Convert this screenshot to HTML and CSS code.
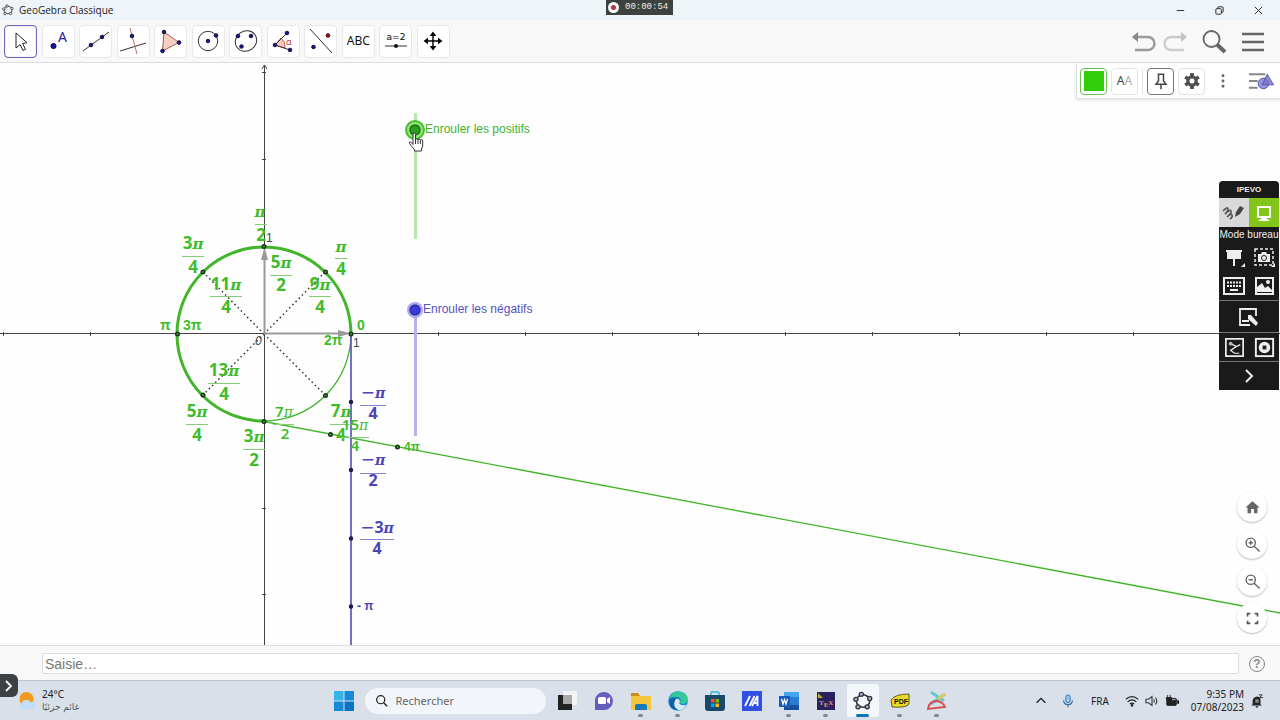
FILE: index.html
```html
<!DOCTYPE html>
<html lang="fr">
<head>
<meta charset="utf-8">
<title>GeoGebra Classique</title>
<link rel="stylesheet" href="styles.css">
</head>
<body>
<header class="titlebar">
  <svg class="app-mark" viewBox="0 0 24 24"><ellipse cx="12" cy="12" rx="8" ry="7.500" fill="none" stroke="#555" stroke-width="2"/><g fill="#e4e6f2" stroke="#444" stroke-width="1.600"><circle cx="10" cy="4" r="2.500"/><circle cx="20" cy="9" r="2.500"/><circle cx="17" cy="19" r="2.500"/><circle cx="6" cy="19" r="2.500"/><circle cx="3.500" cy="10" r="2.500"/></g></svg>
  <span class="app-title">GeoGebra Classique</span>
  <div class="window-buttons">
    <button aria-label="Réduire"><svg viewBox="0 0 12 12"><path d="M2 6h8"/></svg></button>
    <button aria-label="Restaurer"><svg viewBox="0 0 12 12"><rect x="2" y="4" width="6" height="6" rx="1"/><path d="M4 4V3q0-1 1-1h4q1 0 1 1v4q0 1-1 1H8"/></svg></button>
    <button aria-label="Fermer"><svg viewBox="0 0 12 12"><path d="M2 2l8 8M10 2l-8 8"/></svg></button>
  </div>
  <div class="recorder"><span class="rec-dot"></span>00:00:54</div>
</header>

<nav class="toolbar">
  <div class="tools">
    <button class="tool active" aria-label="Déplacer"><svg viewBox="0 0 32 32"><path d="M11 8v15l4-3.500 3 6 2.500-1.300-3-5.700 4.500-.8z" fill="#fff" stroke="#222"/></svg></button>
    <button class="tool" aria-label="Point"><svg viewBox="0 0 32 32"><circle cx="11.500" cy="21" r="2.600" class="pt"/><text x="16" y="17" class="tool-a">A</text></svg></button>
    <button class="tool" aria-label="Droite"><svg viewBox="0 0 32 32"><path d="M3 26L29 7" class="ln"/><circle cx="11" cy="20" r="1.800" class="pt"/><circle cx="22" cy="12" r="1.800" class="pt"/></svg></button>
    <button class="tool" aria-label="Perpendiculaire"><svg viewBox="0 0 32 32"><path d="M3 26l26-8" class="ln"/><path d="M13 3l7 26" stroke="#c66" fill="none"/><circle cx="15" cy="11" r="1.800" class="pt"/></svg></button>
    <button class="tool" aria-label="Polygone"><svg viewBox="0 0 32 32"><path d="M9 7l15 10.500L7.500 26z" fill="#f3d0c2" stroke="#a65a50"/><circle cx="9" cy="7" r="1.800" class="pt"/><circle cx="24" cy="17.500" r="1.800" class="pt"/><circle cx="7.500" cy="26" r="1.800" class="pt"/></svg></button>
    <button class="tool" aria-label="Cercle"><svg viewBox="0 0 32 32"><circle cx="16" cy="16" r="9.700" class="ln"/><circle cx="16" cy="16" r="1.800" class="pt"/><circle cx="24" cy="10.500" r="1.800" class="pt"/></svg></button>
    <button class="tool" aria-label="Ellipse"><svg viewBox="0 0 32 32"><ellipse cx="16" cy="16" rx="11" ry="10" transform="rotate(-35 16 16)" class="ln"/><circle cx="8" cy="11" r="1.800" class="pt"/><circle cx="21" cy="11" r="1.800" class="pt"/><circle cx="11.500" cy="21.500" r="1.800" class="pt"/></svg></button>
    <button class="tool" aria-label="Angle"><svg viewBox="0 0 32 32"><path d="M8 20l6-7q5 4 4 10z" fill="#f8c8c0" stroke="#c55"/><path d="M20 8L8 20l15 5" class="ln"/><text x="19" y="20" class="tool-alpha">α</text><circle cx="20" cy="8" r="1.800" class="pt"/><circle cx="8" cy="20" r="1.800" class="pt"/><circle cx="23" cy="25" r="1.800" class="pt"/></svg></button>
    <button class="tool" aria-label="Symétrie"><svg viewBox="0 0 32 32"><path d="M5 4l22 24" class="ln"/><circle cx="8.500" cy="22" r="1.800" class="pt"/><circle cx="23" cy="10.500" r="1.800" fill="#a11" stroke="#400"/></svg></button>
    <button class="tool text-tool">ABC</button>
    <button class="tool" aria-label="Curseur a=2"><svg viewBox="0 0 32 32"><text x="16" y="15" class="tool-eq">a=2</text><path d="M5 21h22" class="ln"/><circle cx="16" cy="21" r="2" fill="#111"/></svg></button>
    <button class="tool" aria-label="Déplacer Graphique"><svg viewBox="0 0 32 32"><path d="M16 9v14M9 16h14" stroke="#000" stroke-width="1.400"/><path d="M16 6.500l3.300 4.500h-6.600zM16 25.500l3.300-4.500h-6.600zM6.500 16l4.500-3.300v6.600zM25.500 16L21 12.700v6.600z"/></svg></button>
  </div>
  <div class="toolbar-right">
    <button aria-label="Annuler"><svg viewBox="0 0 26 26"><path d="M5 9h12a6 6 0 0 1 0 13H4" fill="none" stroke="#999" stroke-width="2.400"/><path d="M1 9l6-5v10z" fill="#888"/></svg></button>
    <button aria-label="Rétablir"><svg viewBox="0 0 26 26"><path d="M21 9H9a6 6 0 0 0 0 13h13" fill="none" stroke="#ccc" stroke-width="2.400"/><path d="M25 9l-6-5v10z" fill="#c4c4c4"/></svg></button>
    <button aria-label="Rechercher"><svg viewBox="0 0 26 26"><circle cx="10.500" cy="11" r="8" fill="none" stroke="#666" stroke-width="1.800"/><path d="M16 16.500l8 7.500" stroke="#666" stroke-width="4"/></svg></button>
    <button aria-label="Menu"><svg viewBox="0 0 26 26"><path d="M2 6h22M2 14h22M2 22h22" stroke="#666" stroke-width="2.500"/></svg></button>
  </div>
</nav>

<main class="stage">
  <svg class="graph" viewBox="0 63 1280 583" preserveAspectRatio="xMinYMin slice">
    <g class="axes">
      <path d="M0 333.500h1280M264.500 646V65M262 69l2.500-4 2.500 4"/>
      <path d="M3.500 332v4M90.500 332v4M177.500 332v4M438.500 332v4M525.500 332v4M612.500 332v4M698.500 332v4M785.500 332v4M872.500 332v4M959.500 332v4M1046.500 332v4M1133.500 332v4M262 72.500h4M262 159.500h4M262 508.500h4M262 594.500h4"/>
    </g>
    <path class="dotted" d="M264 334L203 272M264 334l61-62M264 334l-61 61M264 334l61 61"/>
    <g class="vectors"><path d="M264 333.500h76M264.500 334v-76"/><path class="tip" d="M351 333.500l-13-3.500v7zM264.500 247l-3.500 13h7z"/></g>
    <path class="arc thick" d="M351 334A87 87 0 1 0 264 421"/>
    <path class="arc thin" d="M264 421A87 87 0 0 0 351 334"/>
    <path class="arc thin" d="M264 421.500L1280 613"/>
    <path class="down" d="M351 334v312"/>
    <g class="axis-text"><text x="266" y="242">1</text><text x="353" y="347">1</text><text x="255" y="345" class="origin">0</text></g>
    <g class="frac">
      <g><text x="260" y="217" class="pi">π</text><text x="261" y="241">2</text><path d="M255 224.500h12"/></g>
      <g><text x="193" y="249">3<tspan class="pi">π</tspan></text><text x="193" y="273">4</text><path d="M182 256.500h22"/></g>
      <g><text x="341" y="252" class="pi">π</text><text x="341" y="275">4</text><path d="M335 258.500h12"/></g>
      <g><text x="226" y="290">11<tspan class="pi">π</tspan></text><text x="226" y="313">4</text><path d="M210 296.500h32"/></g>
      <g><text x="281" y="268">5<tspan class="pi">π</tspan></text><text x="281" y="291">2</text><path d="M270 275.500h22"/></g>
      <g><text x="320" y="290">9<tspan class="pi">π</tspan></text><text x="320" y="313">4</text><path d="M309 296.500h22"/></g>
      <g><text x="224" y="376">13<tspan class="pi">π</tspan></text><text x="224" y="400">4</text><path d="M208 383.500h32"/></g>
      <g><text x="197" y="417">5<tspan class="pi">π</tspan></text><text x="197" y="441">4</text><path d="M186 424.500h22"/></g>
      <g><text x="254" y="442">3<tspan class="pi">π</tspan></text><text x="254" y="466">2</text><path d="M243 449.500h22"/></g>
      <g><text x="341" y="417">7<tspan class="pi">π</tspan></text><text x="341" y="441">4</text><path d="M330 424.500h22"/></g>
      <g class="light"><text x="284" y="417">7<tspan class="pi">π</tspan></text><text x="285" y="439">2</text><path d="M273 424.500h21"/></g>
      <g class="light"><text x="355" y="430">15<tspan class="pi">π</tspan></text><text x="355" y="451">4</text><path d="M341 437.500h28"/></g>
      <g class="blue"><text x="373" y="398"><tspan class="minus">−</tspan><tspan class="pi">π</tspan></text><text x="373" y="419">4</text><path d="M360 405.500h26"/></g>
      <g class="blue"><text x="373" y="465"><tspan class="minus">−</tspan><tspan class="pi">π</tspan></text><text x="373" y="486">2</text><path d="M360 473.500h26"/></g>
      <g class="blue"><text x="377" y="533"><tspan class="minus">−</tspan>3<tspan class="pi">π</tspan></text><text x="377" y="554">4</text><path d="M360 539.500h34"/></g>
    </g>
    <g class="plain"><text x="160" y="330">π</text><text x="183" y="330">3π</text><text x="357" y="330">0</text><text x="324" y="345">2π</text></g>
    <g class="plain small"><text x="404" y="451">4π</text><text x="357" y="610" class="ink">- π</text></g>
    <g class="dots"><circle cx="264" cy="246.500" r="1.800"/><circle cx="203" cy="272" r="1.800"/><circle cx="325.500" cy="272" r="1.800"/><circle cx="177.500" cy="334" r="1.800"/><circle cx="351" cy="334" r="1.800"/><circle cx="203" cy="395" r="1.800"/><circle cx="325.500" cy="395.500" r="1.800"/><circle cx="264" cy="421.500" r="1.800"/><circle cx="330.500" cy="434.500" r="1.800"/><circle cx="397.500" cy="447" r="1.800"/></g>
    <g class="dots navy"><circle cx="351" cy="402" r="1.500"/><circle cx="351" cy="470" r="1.500"/><circle cx="351" cy="538.500" r="1.500"/><circle cx="351" cy="606.500" r="1.500"/></g>
  </svg>

  <input class="slider positive" id="positive" type="range" min="0" max="126" value="109">
  <label class="slider-label positive-label" for="positive">Enrouler les positifs</label>
  <input class="slider negative" id="negative" type="range" min="0" max="126" value="126">
  <label class="slider-label negative-label" for="negative">Enrouler les négatifs</label>
  <svg class="hand" viewBox="0 0 16 20"><path d="M5 11V2.500Q5 1 6.200 1t1.300 1.500V8q0-1.200 1.200-1.200T10 8q0-1 1.200-1T12.400 8.500q0-1 1.100-1t1.200 1.500v4q0 2-1.200 4v2H6.500v-1.500Q4 15 1.500 11.500q-.5-1.300.6-1.500T5 12.500z" fill="#fff" stroke="#333" stroke-linejoin="round"/><path d="M7.500 8v4M10 8v4M12.400 8.500V12" stroke="#333"/></svg>

  <div class="stylebar">
    <button class="swatch" aria-label="Couleur"><span></span></button>
    <button class="aa" aria-label="Style de l'étiquette"><b>A</b>A</button>
    <span class="rule"></span>
    <button class="pin" aria-label="Épingler"><svg viewBox="0 0 24 24"><path d="M8 4h8M9 4v8l-3 4h12l-3-4V4M12 16v6" fill="none" stroke="#444" stroke-width="1.800"/></svg></button>
    <button aria-label="Réglages"><svg viewBox="0 0 24 24"><path d="M12 2.500v19M3.800 7.200l16.400 9.600M20.200 7.200L3.800 16.800" stroke="#505050" stroke-width="4.500"/><circle cx="12" cy="12" r="5" fill="#fff" stroke="#505050" stroke-width="4"/></svg></button>
    <button class="bare" aria-label="Plus"><svg viewBox="0 0 24 24" fill="#666"><circle cx="12" cy="4" r="2.200"/><circle cx="12" cy="12" r="2.200"/><circle cx="12" cy="20" r="2.200"/></svg></button>
    <button class="bare views" aria-label="Vues"><svg viewBox="0 0 28 20"><path d="M1 3h17M1 10h9M1 17h9" stroke="#888" stroke-width="2"/><circle cx="16" cy="12.500" r="5.500" fill="#9a94e0" stroke="#555aa0"/><path d="M20 3l6.500 11h-12z" fill="#7771d0" fill-opacity=".8" stroke="#555aa0"/></svg></button>
  </div>

  <aside class="palette">
    <div class="palette-name">IPEVO</div>
    <div class="modes">
      <button aria-label="Mode annotation"><svg viewBox="0 0 30 28"><path d="M4 12q5-5 5-2t-3 5q5-5 6-3t-4 6q4-4 5-2t-2 4" fill="none" stroke="#555" stroke-width="1.600"/><path d="M16 18l1-5 4-6 4 2-4 6z" fill="#444"/></svg></button>
      <button class="on" aria-label="Mode bureau"><svg viewBox="0 0 30 28"><rect x="9" y="8" width="12" height="10" fill="none" stroke="#fff" stroke-width="2"/><path d="M13 19h4l4 3H9z" fill="#fff"/></svg></button>
    </div>
    <div class="mode-name">Mode bureau</div>
    <div class="pair">
      <button aria-label="Tableau"><svg viewBox="0 0 24 24"><path d="M4 5h16v2h-1v7H5V7H4zM11 14h2v7h-2zM23 18v4h-4z" fill="#eee"/></svg></button>
      <button aria-label="Capture"><svg viewBox="0 0 24 24"><rect x="3" y="4" width="18" height="16" fill="none" stroke="#eee" stroke-width="1.500" stroke-dasharray="3 2"/><path d="M6 9h3l1-2h4l1 2h3v8H6zM23 18v4h-4z" fill="#eee"/><circle cx="12" cy="13" r="2.500" fill="#eee" stroke="#1a1a1a"/></svg></button>
      <button aria-label="Clavier"><svg viewBox="0 0 24 24"><rect x="2" y="4" width="20" height="16" fill="none" stroke="#eee" stroke-width="2"/><path d="M5 8.500h14M5 12h14" stroke="#eee" stroke-width="2" stroke-dasharray="2 1"/><path d="M8 16h8" stroke="#eee" stroke-width="2"/></svg></button>
      <button aria-label="Image"><svg viewBox="0 0 24 24"><rect x="4" y="4" width="17" height="16" fill="none" stroke="#eee" stroke-width="2"/><path d="M5 18v-5l5-4 3 5 3-2 4 4v2z" fill="#eee"/><circle cx="16" cy="8" r="2" fill="#eee"/></svg></button>
    </div>
    <div class="single"><button aria-label="Page"><svg viewBox="0 0 24 24"><path d="M19 11V4H3v16h10M5 16h7" fill="none" stroke="#eee" stroke-width="1.800"/><path d="M11 10l3 0 7 8-2 3-8-7z" fill="#eee"/></svg></button></div>
    <div class="pair low">
      <button aria-label="Caméra"><svg viewBox="0 0 24 24"><rect x="3" y="3" width="18" height="18" fill="none" stroke="#eee" stroke-width="1.800"/><path d="M8 8l6 3 4-2M14 11l-6 4 4 3h5" fill="none" stroke="#eee" stroke-width="1.300"/><circle cx="8" cy="8" r="2" fill="#bbb"/></svg></button>
      <button aria-label="Enregistrer"><svg viewBox="0 0 24 24"><rect x="3" y="3" width="18" height="18" fill="none" stroke="#eee" stroke-width="2"/><circle cx="12" cy="12" r="6" fill="#eee"/><rect x="10" y="10" width="4" height="4" fill="#222"/></svg></button>
    </div>
    <div class="single last"><button aria-label="Suite"><svg viewBox="0 0 24 24"><path d="M9 6l6 6-6 6" fill="none" stroke="#eee" stroke-width="2"/></svg></button></div>
  </aside>

  <div class="zoomers">
    <button aria-label="Vue initiale"><svg viewBox="0 0 24 24" fill="#666"><path d="M10 20v-6h4v6h5v-8h3L12 3 2 12h3v8z"/></svg></button>
    <button aria-label="Agrandir"><svg viewBox="0 0 24 24" fill="none" stroke="#666" stroke-width="2"><circle cx="9.500" cy="9.500" r="6.500"/><path d="M14 14l8 8M6.500 9.500h6M9.500 6.500v6"/></svg></button>
    <button aria-label="Réduire"><svg viewBox="0 0 24 24" fill="none" stroke="#666" stroke-width="2"><circle cx="9.500" cy="9.500" r="6.500"/><path d="M14 14l8 8M6.500 9.500h6"/></svg></button>
    <button aria-label="Plein écran"><svg viewBox="0 0 24 24" fill="none" stroke="#555" stroke-width="2.400"><path d="M5 9V5h4M15 5h4v4M19 15v4h-4M9 19H5v-4"/></svg></button>
  </div>
</main>

<section class="entry">
  <input class="entry-field" type="text" placeholder="Saisie…" aria-label="Saisie">
  <button class="help" aria-label="Aide">?</button>
  <button class="side-tab" aria-label="Ouvrir"><svg viewBox="0 0 12 16"><path d="M3 3l5 5-5 5" fill="none" stroke="#fff" stroke-width="1.800"/></svg></button>
</section>

<footer class="taskbar">
  <div class="weather">
    <svg viewBox="0 0 20 20"><circle cx="10" cy="8" r="7.500" fill="#f29a1c"/><path d="M5 19a4 4 0 0 1 0-7 5 5 0 0 1 9-1 4 4 0 0 1 2 8z" fill="#c3ddf8"/></svg>
    <div><div>24°C</div><div class="arabic" lang="ar" dir="rtl">غائم جزئيًا</div></div>
  </div>
  <div class="apps">
    <button aria-label="Démarrer"><svg viewBox="0 0 20 20"><g fill="#1689d8"><path d="M0 0h9.500v9.500H0z" fill="#35b3ee"/><path d="M10.500 0H20v9.500h-9.500zM0 10.500h9.500V20H0z"/><path d="M10.500 10.500H20V20h-9.500z" fill="#0874c6"/></g></svg></button>
    <label class="search"><svg viewBox="0 0 16 16"><circle cx="7" cy="7" r="5" fill="none" stroke="#222" stroke-width="1.500"/><path d="M11 11l4 4" stroke="#222" stroke-width="1.800"/></svg><input type="search" placeholder="Rechercher" aria-label="Rechercher"></label>
    <button aria-label="Bureaux"><svg viewBox="0 0 20 20"><path d="M6 0h14v14H6z" fill="#f3f4f3"/><path d="M1 4h14v15H1z" fill="#222"/><path d="M6 4h9v9H6z" fill="#aaa"/></svg></button>
    <button aria-label="Conversation"><svg viewBox="0 0 20 20"><path d="M1 19V9a9 9 0 1 1 9 10z" fill="#675bbd"/><rect x="4" y="6" width="8" height="7" rx="1.500" fill="#fff"/><path d="M13 8l3-2v7l-3-2z" fill="#fff"/></svg></button>
    <button class="run" aria-label="Explorateur"><svg viewBox="0 0 20 20"><path d="M0 2h7l2 3h11v14H0z" fill="#f6c73d"/><path d="M0 2h7l2 3H0z" fill="#c88b1e"/><path d="M4 19v-4q0-2 2-2h8q2 0 2 2v4z" fill="#1479bd"/></svg></button>
    <button class="run" aria-label="Edge"><svg viewBox="0 0 20 20"><circle cx="10" cy="10" r="9.800" fill="#1485cf"/><path d="M1 8Q4 0 11 .2q9 1 8.800 9-1 4-6 3.800-3-1-1-3 0-5-7-4Q2 6 1 8z" fill="#34c99a"/><path d="M7 9q3-3 5 1-2 3 2 4 3 1 5-1-3 7-9 6-6-4-3-10z" fill="#d9ebf5"/><path d="M7 9q-3 7 3 10-9 0-8.500-9Q3 6 8 7z" fill="#1261a7"/></svg></button>
    <button aria-label="Store"><svg viewBox="0 0 20 20"><path d="M6 5V2q0-1 1-1h6q1 0 1 1v3" fill="none" stroke="#35b0df" stroke-width="1.500"/><path d="M0 4h20v13q0 3-3 3H3q-3 0-3-3z" fill="#17496d"/><path d="M6 8h3.500v3.500H6z" fill="#f25022"/><path d="M10.500 8H14v3.500h-3.500z" fill="#7fba00"/><path d="M6 12.500h3.500V16H6z" fill="#00a4ef"/><path d="M10.500 12.500H14V16h-3.500z" fill="#ffb900"/></svg></button>
    <button aria-label="MyAsus"><svg viewBox="0 0 20 20"><path d="M0 0h20v20H0z" fill="#304fe5"/><path d="M3 15L8 5M7.500 15l5-10M10 15l5.500-10v10M12 12h3.500" fill="none" stroke="#fff" stroke-width="1.800"/></svg></button>
    <button class="run" aria-label="Word"><svg viewBox="0 0 20 20"><path d="M5 1h15v18H5z" fill="#2b7cd3"/><path d="M5 1h15v5H5z" fill="#43a5ee"/><path d="M5 14h15v5H5z" fill="#174f9c"/><path d="M0 5h11v11H0z" fill="#185abd"/><path d="M2.500 8l1.500 5 1.500-4.500L7 13l1.500-5" fill="none" stroke="#fff" stroke-width="1.300"/></svg></button>
    <button class="run" aria-label="TeX"><svg viewBox="0 0 20 20"><path d="M1 1h18v18H1z" fill="#29205d"/><path d="M2 2l5 5H2z" fill="#bbae25"/><text x="3" y="14" class="tex">T<tspan dy="2">E</tspan><tspan dy="-2">X</tspan></text></svg></button>
    <button class="run current" aria-label="GeoGebra"><svg viewBox="0 0 24 24"><ellipse cx="12" cy="12" rx="8" ry="7.500" fill="none" stroke="#333" stroke-width="1.800"/><g fill="#aaa9ea" stroke="#333" stroke-width="1.500"><circle cx="10" cy="4" r="2.500"/><circle cx="20" cy="9" r="2.500"/><circle cx="17" cy="19" r="2.500"/><circle cx="6" cy="19" r="2.500"/><circle cx="3.500" cy="10" r="2.500"/></g></svg></button>
    <button class="run" aria-label="PDF"><svg viewBox="0 0 20 20"><path d="M1 9Q5 3 19 3v10q-2 4-17 3z" fill="#eadb24" stroke="#5f5b21"/><text x="4" y="13" class="pdf">PDF</text></svg></button>
    <button class="run" aria-label="Géométrie"><svg viewBox="0 0 20 20"><path d="M4 1l13 9M18 3L4 13" stroke="#62c9cd" stroke-width="3"/><path d="M18 3l-7 5" stroke="#e4c75c" stroke-width="3"/><path d="M1 18q1-8 9-8 6 1 8 6z" fill="none" stroke="#d64e50" stroke-width="2"/></svg></button>
  </div>
  <div class="tray">
    <button aria-label="Icônes cachées"><svg viewBox="0 0 16 16"><path d="M3 10l5-5 5 5" fill="none" stroke="#222" stroke-width="1.600"/></svg></button>
    <button class="mic" aria-label="Micro"><svg viewBox="0 0 16 16"><rect x="5.500" y="1" width="5" height="9" rx="2.500" fill="#9bc6ea" stroke="#2c6ca6"/><path d="M3 7q0 5 5 5t5-5M8 12v3" fill="none" stroke="#2c6ca6" stroke-width="1.300"/></svg></button>
    <span class="lang">FRA</span>
    <button class="status" aria-label="Réseau, son, batterie">
      <svg viewBox="0 0 16 16" fill="none" stroke="#222" stroke-width="1.300"><path d="M1 6q7-6 14 0M3 9q5-4.500 10 0M5.500 11.500q2.500-2 5 0"/><circle cx="8" cy="13" r=".8"/></svg>
      <svg viewBox="0 0 16 16" fill="none" stroke="#333" stroke-width="1.200"><path d="M1 6h3l4-3v10L4 10H1zM10 6q1.500 2 0 4M12 4q3 4 0 8"/></svg>
      <svg viewBox="0 0 16 16"><rect x="2" y="5" width="11" height="8" rx="1" fill="#222" stroke="#222"/><path d="M14 7h2v4h-2z"/><path d="M3 1v3M6 1v3M1.500 4h6v2q-3 3-6 0z" fill="#222" stroke="#222"/><path d="M8 6h4v1H8z" fill="#ccd"/></svg>
    </button>
    <div class="clock"><div>9:35 PM</div><div>07/08/2023</div></div>
    <svg viewBox="0 0 16 16"><path d="M3 12V7a5 5 0 0 1 9-2v7l2 1H1zM6 14h4l-2 2z" fill="#222"/><path d="M10 1h4l-3 3h4M7 7h3l-3 3h3" fill="none" stroke="#222"/><path d="M6 6h4v4H6z" fill="#888"/></svg>
  </div>
</footer>
</body>
</html>
```
FILE: styles.css
```css
* { box-sizing: border-box; }
body {
  margin: 0;
  height: 100vh;
  display: flex;
  flex-direction: column;
  overflow: hidden;
  font: 11px/14px "Noto Sans", sans-serif;
  color: #222;
  background: #fff;
}
button { border: 0; padding: 0; background: none; font: inherit; color: inherit; display: flex; align-items: center; justify-content: center; }
svg { display: block; }

.titlebar { position: relative; height: 20px; flex: none; display: flex; align-items: center; padding-left: 2px; background: #eef4f7; }
.app-mark { width: 12px; height: 12px; }
.app-title { margin-left: 5px; font: 10px/18px "Open Sans", sans-serif; }
.window-buttons { margin-left: auto; display: flex; padding-right: 2px; }
.window-buttons button { width: 39px; height: 19px; }
.window-buttons svg { width: 11px; height: 11px; fill: none; stroke: #222; }
.recorder { position: absolute; left: 50%; top: 0; margin-left: -34px; width: 67px; height: 15px; display: flex; align-items: center; gap: 6px; padding-left: 2px; background: #3d423e; color: #eee; font: 9px/15px "Liberation Mono", monospace; }
.rec-dot { width: 11px; height: 11px; border: 3px solid #fff; border-radius: 50%; background: #b33; }

.toolbar { height: 43px; flex: none; display: flex; justify-content: space-between; align-items: center; padding: 0 14px 0 4px; background: #f8f8f8; border-bottom: 1px solid #ddd; }
.tools { display: flex; justify-content: space-between; width: 446px; }
.tool { width: 33px; height: 33px; background: #fff; border: 1px solid #e8e8e8; border-radius: 4px; }
.tool.active { border-color: #6b69b8; box-shadow: inset 0 0 1px #6b69b8; }
.tool svg { width: 32px; height: 32px; flex: none; }
.pt { fill: #1515a0; stroke: #101040; }
.ln { fill: none; stroke: #333; }
.tool-a { font: 14px "Noto Sans", sans-serif; fill: #22a; }
.tool-alpha { font: 9px "Noto Sans", sans-serif; fill: #d33; }
.tool-eq { font: 9px "DejaVu Sans", sans-serif; text-anchor: middle; }
.text-tool { font-size: 12px; color: #111; }
.toolbar-right { display: flex; gap: 13px; }
.toolbar-right button { width: 26px; height: 30px; }
.toolbar-right button:first-child { margin-right: -8px; }
.toolbar-right svg { width: 26px; height: 26px; }

.stage { position: relative; flex: 1; min-height: 0; overflow: hidden; background: #fefefe; }
.graph { position: absolute; inset: 0; width: 100%; height: 100%; }
.axes { fill: none; stroke: #444; }
.dotted { fill: none; stroke: #333; stroke-width: 1.5; stroke-dasharray: 1.5 3; }
.vectors { fill: none; stroke: #999; stroke-width: 2; }
.tip { fill: #999; stroke: none; }
.arc { fill: none; stroke: #42b52a; }
.thick { stroke-width: 3; }
.thin { stroke-width: 1.3; }
.down { fill: none; stroke: #5a58bd; stroke-width: 1.7; }
.axis-text { font: 12px "Liberation Sans", sans-serif; fill: #444; }
.origin { font-style: italic; }
.frac { font: bold 17px "Noto Sans", sans-serif; text-anchor: middle; fill: #3ebc2a; }
.frac path { fill: none; stroke: #83cf76; }
.frac .pi { font: italic bold 15px "DejaVu Serif", serif; }
.frac .light, .frac .light .pi { font-size: 15px; font-weight: 600; }
.frac .light .pi { font-size: 14px; font-weight: 400; }
.frac .blue { font-size: 16px; fill: #4a45ba; }
.frac .blue .pi { font-size: 14px; }
.frac .blue path { stroke: #8582ce; }
.minus { font: 17px "DejaVu Sans", sans-serif; }
.plain { font: bold 14px "Liberation Sans", sans-serif; fill: #3ebc2a; }
.small { font-size: 12px; }
.ink { fill: #4a45ba; }
.dots circle { fill: #5a8a50; stroke: #123812; stroke-width: 1.4; }
.dots.navy circle { fill: #22226a; stroke: #18184a; }

.slider { position: absolute; margin: 0; appearance: none; -webkit-appearance: none; writing-mode: vertical-lr; direction: rtl; width: 20px; background: none; }
.slider::-webkit-slider-runnable-track { width: 20px; background: none; }
.slider::-webkit-slider-thumb { -webkit-appearance: none; border-radius: 50%; }
.positive { left: 405px; top: 40px; height: 146px; background: linear-gradient(#b6e8a9, #b6e8a9) center / 3px 126px no-repeat; }
.positive::-webkit-slider-thumb { width: 20px; height: 20px; border: 2px solid #46c12d; background: radial-gradient(circle, #2d9b1c 4px, #174f10 5px, #8be373 6px); }
.negative { left: 405px; top: 239px; height: 142px; background: linear-gradient(#b5b3ec, #b5b3ec) center / 3px 126px no-repeat; }
.negative::-webkit-slider-thumb { width: 16px; height: 16px; margin-left: 2px; background: radial-gradient(circle, #3c39df 4px, #24227c 5px, #aaa7ed 6px); }
.slider-label { position: absolute; font: 12px/16px "Liberation Sans", sans-serif; }
.positive-label { left: 425px; top: 58px; color: #42b32c; }
.negative-label { left: 423px; top: 238px; color: #5553c2; }
.hand { position: absolute; left: 408px; top: 69px; width: 16px; height: 20px; fill: none; pointer-events: none; }

.stylebar { position: absolute; top: 1px; right: 0; height: 35px; display: flex; align-items: center; gap: 4px; padding: 0 5px 0 3px; background: #fff; border: 1px solid #e0e0e0; border-width: 0 0 1px 1px; box-shadow: 0 1px 3px #ddd; }
.stylebar button { width: 27px; height: 27px; border: 1px solid #e4e4e4; border-radius: 4px; }
.stylebar svg { width: 20px; height: 20px; }
.stylebar .swatch { border: 1px solid #65c64e; }
.swatch span { width: 20px; height: 20px; background: #33cc0b; }
.stylebar .aa { color: #aaa; font-size: 12px; }
.aa b { font-weight: 400; color: #444; }
.rule { width: 1px; height: 27px; background: #e5e5e5; }
.stylebar .pin { border-color: #777; }
.stylebar .bare { border: 0; }
.stylebar .bare svg { width: 16px; height: 16px; }
.stylebar .views { margin-left: 8px; }
.stylebar .views svg { width: 28px; height: 20px; }

.palette { position: absolute; top: 118px; right: 1px; width: 60px; border-radius: 4px 4px 0 0; overflow: hidden; background: #1a1a1a; color: #eee; }
.palette-name { height: 17px; text-align: center; font: bold 8px/18px "Liberation Sans", sans-serif; }
.modes { display: grid; grid-template-columns: 1fr 1fr; height: 29px; background: #d9d9d9; }
.modes svg { width: 30px; height: 28px; }
.modes .on { background: #84c51b; }
.mode-name { font: 10px/15px "Liberation Sans", sans-serif; white-space: nowrap; text-align: center; padding-bottom: 1px; }
.pair { display: grid; grid-template-columns: 1fr 1fr; height: 58px; border-bottom: 1px solid #777; }
.pair svg { width: 24px; height: 24px; }
.single { height: 31px; display: grid; justify-content: center; align-content: center; }
.single svg { width: 24px; height: 24px; }
.low { height: 30px; border-top: 1px solid #777; }
.low svg { width: 23px; height: 23px; }
.last { height: 28px; }

.zoomers { position: absolute; right: 13px; bottom: 12px; display: grid; gap: 7px; }
.zoomers button { width: 30px; height: 30px; border-radius: 50%; background: #fff; box-shadow: 0 1px 2px #bbb; }
.zoomers svg { width: 17px; height: 17px; }

.entry { position: relative; height: 35px; flex: none; display: flex; align-items: center; gap: 10px; padding: 1px 15px 0 42px; background: #f8f8f9; border-top: 1px solid #ddd; }
.entry-field { flex: 1; min-width: 0; height: 21px; padding: 0 2px; border: 1px solid #ddd; border-radius: 2px; background: #fff; font: 14px "Liberation Sans", sans-serif; }
.entry-field::placeholder { color: #777; opacity: 1; }
.help { width: 16px; height: 16px; border: 1px solid #888; border-radius: 50%; color: #888; font: bold 12px/12px "Liberation Sans", sans-serif; }
.side-tab { position: absolute; left: 0; top: 28px; z-index: 2; width: 18px; height: 23px; border-radius: 0 6px 6px 0; background: #3e4144; }
.side-tab svg { width: 12px; height: 16px; }

.taskbar { height: 40px; flex: none; display: grid; grid-template-columns: 1fr auto 1fr; align-items: center; background: #d9e0ea; border-top: 1px solid #bfc5cd; }
.weather { display: flex; align-items: center; gap: 6px; padding-left: 17px; font-size: 10px; line-height: 13px; }
.weather svg { width: 19px; height: 20px; }
.arabic { font: 9px/13px "DejaVu Sans", sans-serif; color: #555; }
.apps { display: flex; align-items: center; gap: 5px; }
.apps button { position: relative; width: 32px; height: 33px; }
.apps svg { width: 20px; height: 20px; }
.run::after { content: ""; position: absolute; bottom: 0; width: 5px; height: 3px; border-radius: 2px; background: #888; }
.current { background: #f4f7fb; border-radius: 3px; }
.apps .current::after { width: 13px; background: #0b73b8; }
.search { display: flex; align-items: center; gap: 8px; width: 181px; height: 26px; padding: 0 10px; border-radius: 13px; background: #f2f5fa; }
.apps .search svg { width: 13px; height: 13px; flex: none; }
.search input { width: 100%; min-width: 0; border: 0; padding: 0; background: none; font: 11px "Noto Sans", sans-serif; }
.search input::placeholder { color: #666; opacity: 1; }
.tex { font: bold 7px "Liberation Serif", serif; fill: #e09670; }
.pdf { font: bold 7px "Liberation Sans", sans-serif; fill: #111; }
.tray { display: flex; align-items: center; justify-content: flex-end; padding-right: 16px; font-size: 10px; }
.tray svg { width: 14px; height: 14px; }
.mic { margin-left: 13px; }
.lang { margin-left: 16px; }
.status { margin-left: 16px; gap: 6px; }
.clock { margin: 0 6px 0 12px; text-align: right; line-height: 13px; }
```
